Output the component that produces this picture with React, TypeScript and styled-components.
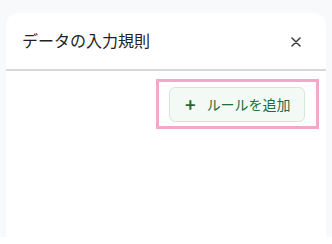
import React from "react";
import styled, { createGlobalStyle } from "styled-components";

const GlobalStyle = createGlobalStyle`
  html, body {
    margin: 0;
    padding: 0;
    background: #ffffff;
    font-family: "Noto Sans CJK JP", "Noto Sans", sans-serif;
  }
`;

const Page = styled.div`
  height: 237px;
  background: #f8f9fb;
  padding: 13px 6px 0;
  box-sizing: border-box;
  overflow: hidden;
`;

const Card = styled.div`
  background: #ffffff;
  border-radius: 12px 12px 0 0;
  height: 100%;
  display: flex;
  flex-direction: column;
`;

const Header = styled.div`
  height: 56px;
  display: flex;
  align-items: center;
  justify-content: space-between;
  padding: 0 22px 0 16px;
  border-bottom: 2px solid #d8d8d8;
  flex-shrink: 0;
`;

const Title = styled.h2`
  margin: 0;
  font-size: 16px;
  font-weight: 400;
  line-height: 20px;
  color: #222222;
  padding-bottom: 2px;
`;

const CloseButton = styled.button`
  width: 16px;
  height: 16px;
  padding: 0;
  border: none;
  background: none;
  display: flex;
  align-items: center;
  justify-content: center;
  cursor: pointer;
  margin-top: 2px;
`;

const Body = styled.div`
  display: flex;
  justify-content: flex-end;
  padding: 8px 7px 0;
`;

const Highlight = styled.div`
  border: 3px solid #f2a9c9;
  padding: 5px 11px 4px 10px;
  display: flex;
`;

const AddButton = styled.button`
  height: 35px;
  width: 136px;
  box-sizing: border-box;
  border: 1px solid #d3e8d9;
  border-radius: 6px;
  background: #f3faf5;
  color: #1f6b3b;
  font-family: "Noto Sans CJK JP", "Noto Sans", sans-serif;
  font-size: 14px;
  display: flex;
  align-items: center;
  justify-content: flex-start;
  gap: 11px;
  padding: 0 0 1px 15px;
  cursor: pointer;
`;

const Plus = styled.span`
  font-size: 18px;
  font-weight: 700;
  line-height: 1;
  margin-top: -1px;
`;

export default function App() {
  return (
    <>
      <GlobalStyle />
      <Page>
        <Card>
          <Header>
            <Title>データの入力規則</Title>
            <CloseButton aria-label="閉じる">
              <svg width="10" height="10" viewBox="0 0 10 10">
                <path d="M1 1 L9 9 M9 1 L1 9" stroke="#3a3a3a" strokeWidth="1.5" strokeLinecap="round" />
              </svg>
            </CloseButton>
          </Header>
          <Body>
            <Highlight>
              <AddButton>
                <Plus>+</Plus>
                <span>ルールを追加</span>
              </AddButton>
            </Highlight>
          </Body>
        </Card>
      </Page>
    </>
  );
}
